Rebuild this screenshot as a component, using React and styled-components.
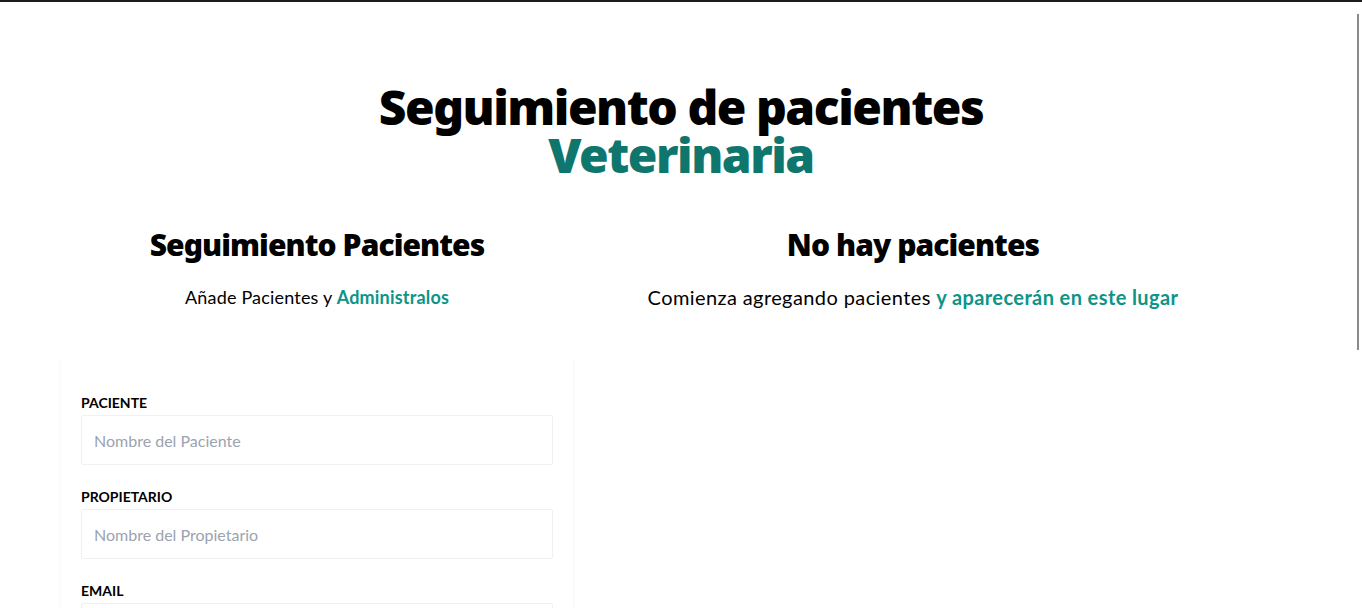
import React from "react";
import styled, { createGlobalStyle } from "styled-components";

const Global = createGlobalStyle`
  html { scrollbar-width: none; }
  html::-webkit-scrollbar { display: none; }
  body {
    margin: 0;
    background: #ffffff;
    font-family: "Lato", "Noto Sans", sans-serif;
    color: #000;
    border-top: 2px solid #1c1c1e;
  }
  * { box-sizing: border-box; }
`;

const ScrollThumb = styled.div`
  position: fixed;
  top: 14px;
  right: 3px;
  width: 2px;
  height: 336px;
  background: #8a8a8a;
`;

const Page = styled.div`
  width: 1280px;
  margin: 81px auto 0;
`;

const Title = styled.h1`
  margin: 0 auto;
  width: 66.666%;
  text-align: center;
  font-family: "Noto Sans", sans-serif;
  font-size: 48px;
  line-height: 48px;
  font-weight: 900;
  letter-spacing: -0.031em;
`;

const Accent = styled.span`
  display: ${(p) => (p.$block ? "block" : "inline")};
  color: ${(p) => p.$color || "#0d9488"};
  font-weight: ${(p) => p.$weight || 700};
`;

const Columns = styled.div`
  display: flex;
  align-items: flex-start;
  margin-top: 48px;
`;

const FormColumn = styled.section`
  width: 512px;
  margin: 0 20px;
  flex-shrink: 0;
`;

const ListColumn = styled.section`
  width: 640px;
  flex-shrink: 0;
`;

const SectionTitle = styled.h2`
  margin: 0;
  text-align: center;
  font-family: "Noto Sans", sans-serif;
  font-size: 30px;
  line-height: 36px;
  font-weight: 900;
  letter-spacing: -0.031em;
`;

const Lead = styled.p`
  margin: 20px 0 40px;
  text-align: center;
  font-size: ${(p) => p.$size}px;
  line-height: 28px;
  letter-spacing: ${(p) => p.$spacing}em;
`;

const Card = styled.form`
  background: #fff;
  border-radius: 8px;
  box-shadow: 0 4px 6px -1px rgba(0, 0, 0, 0.06), 0 2px 4px -2px rgba(0, 0, 0, 0.05);
  padding: 40px 20px;
  margin-bottom: 40px;
`;

const Field = styled.div`
  margin-bottom: 20px;
`;

const Label = styled.label`
  display: block;
  font-size: 14px;
  line-height: 24px;
  font-weight: 700;
  text-transform: uppercase;
  color: #000;
`;

const Input = styled.input`
  display: block;
  width: 100%;
  height: 50px;
  border: 1px solid #f0f0f0;
  border-radius: 2px;
  padding: 12px;
  font-family: inherit;
  font-size: 16px;
  color: #111;
  outline: none;
  &::placeholder { color: #9ca3af; }
`;

const TextArea = styled.textarea`
  display: block;
  width: 100%;
  height: 80px;
  border: 1px solid #f0f0f0;
  padding: 12px;
  font-family: inherit;
  font-size: 16px;
  &::placeholder { color: #9ca3af; }
`;

const Submit = styled.button`
  width: 100%;
  padding: 12px;
  border: none;
  background: #0d9488;
  color: #fff;
  font-family: inherit;
  font-weight: 700;
  text-transform: uppercase;
  font-size: 16px;
`;

export default function App() {
  return (
    <>
      <Global />
      <ScrollThumb />
      <Page>
        <Title>
          Seguimiento de pacientes{" "}
          <Accent $block $color="#0f766e" $weight={900}>Veterinaria</Accent>
        </Title>
        <Columns>
          <FormColumn>
            <SectionTitle>Seguimiento Pacientes</SectionTitle>
            <Lead $size={18} $spacing={0.01}>
              Añade Pacientes y <Accent>Administralos</Accent>
            </Lead>
            <Card>
              <Field>
                <Label htmlFor="mascota">Paciente</Label>
                <Input id="mascota" type="text" placeholder="Nombre del Paciente" />
              </Field>
              <Field>
                <Label htmlFor="propietario">Propietario</Label>
                <Input id="propietario" type="text" placeholder="Nombre del Propietario" />
              </Field>
              <Field>
                <Label htmlFor="email">Email</Label>
                <Input id="email" type="email" placeholder="Email Contacto Propietario" />
              </Field>
              <Field>
                <Label htmlFor="alta">Alta</Label>
                <Input id="alta" type="date" />
              </Field>
              <Field>
                <Label htmlFor="sintomas">Síntomas</Label>
                <TextArea id="sintomas" placeholder="Describe los Síntomas" />
              </Field>
              <Submit type="submit">Agregar Paciente</Submit>
            </Card>
          </FormColumn>
          <ListColumn>
            <SectionTitle>No hay pacientes</SectionTitle>
            <Lead $size={20} $spacing={0.02}>
              Comienza agregando pacientes <Accent>y aparecerán en este lugar</Accent>
            </Lead>
          </ListColumn>
        </Columns>
      </Page>
    </>
  );
}
